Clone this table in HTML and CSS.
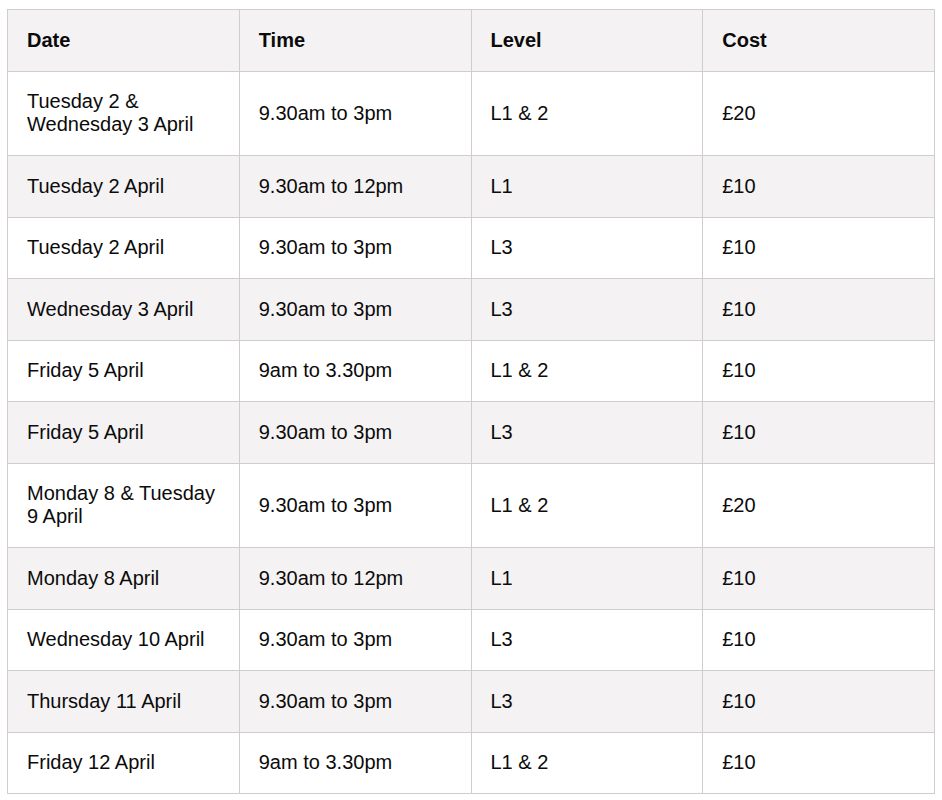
FILE: index.html
```html
<!DOCTYPE html>
<html lang="en">
<head>
<meta charset="utf-8">
<title>Course dates</title>
<link rel="stylesheet" href="styles.css">
</head>
<body>
<div class="wrap">
<table class="schedule">
  <thead>
    <tr><th>Date</th><th>Time</th><th>Level</th><th>Cost</th></tr>
  </thead>
  <tbody>
    <tr><td>Tuesday 2 &amp; Wednesday 3 April</td><td>9.30am to 3pm</td><td>L1 &amp; 2</td><td>£20</td></tr>
    <tr><td>Tuesday 2 April</td><td>9.30am to 12pm</td><td>L1</td><td>£10</td></tr>
    <tr><td>Tuesday 2 April</td><td>9.30am to 3pm</td><td>L3</td><td>£10</td></tr>
    <tr><td>Wednesday 3 April</td><td>9.30am to 3pm</td><td>L3</td><td>£10</td></tr>
    <tr><td>Friday 5 April</td><td>9am to 3.30pm</td><td>L1 &amp; 2</td><td>£10</td></tr>
    <tr><td>Friday 5 April</td><td>9.30am to 3pm</td><td>L3</td><td>£10</td></tr>
    <tr><td>Monday 8 &amp; Tuesday 9 April</td><td>9.30am to 3pm</td><td>L1 &amp; 2</td><td>£20</td></tr>
    <tr><td>Monday 8 April</td><td>9.30am to 12pm</td><td>L1</td><td>£10</td></tr>
    <tr><td>Wednesday 10 April</td><td>9.30am to 3pm</td><td>L3</td><td>£10</td></tr>
    <tr><td>Thursday 11 April</td><td>9.30am to 3pm</td><td>L3</td><td>£10</td></tr>
    <tr><td>Friday 12 April</td><td>9am to 3.30pm</td><td>L1 &amp; 2</td><td>£10</td></tr>
  </tbody>
</table>
</div>
</body>
</html>
```
FILE: styles.css
```css
html, body {
  margin: 0;
  padding: 0;
  background: #ffffff;
}
.wrap {
  padding: 9px 7px;
}
.schedule {
  width: 928px;
  border-collapse: collapse;
  table-layout: fixed;
  font-family: "Liberation Sans", Arial, sans-serif;
  font-size: 20px;
  line-height: 23px;
  color: #0b0b0b;
}
.schedule th,
.schedule td {
  width: 25%;
  border: 1px solid #cfcdce;
  padding: 18.75px 19px;
  text-align: left;
  vertical-align: middle;
}
.schedule th {
  font-weight: bold;
  background: #f4f2f3;
}
.schedule tbody tr:nth-child(even) td {
  background: #f4f2f3;
}
```
